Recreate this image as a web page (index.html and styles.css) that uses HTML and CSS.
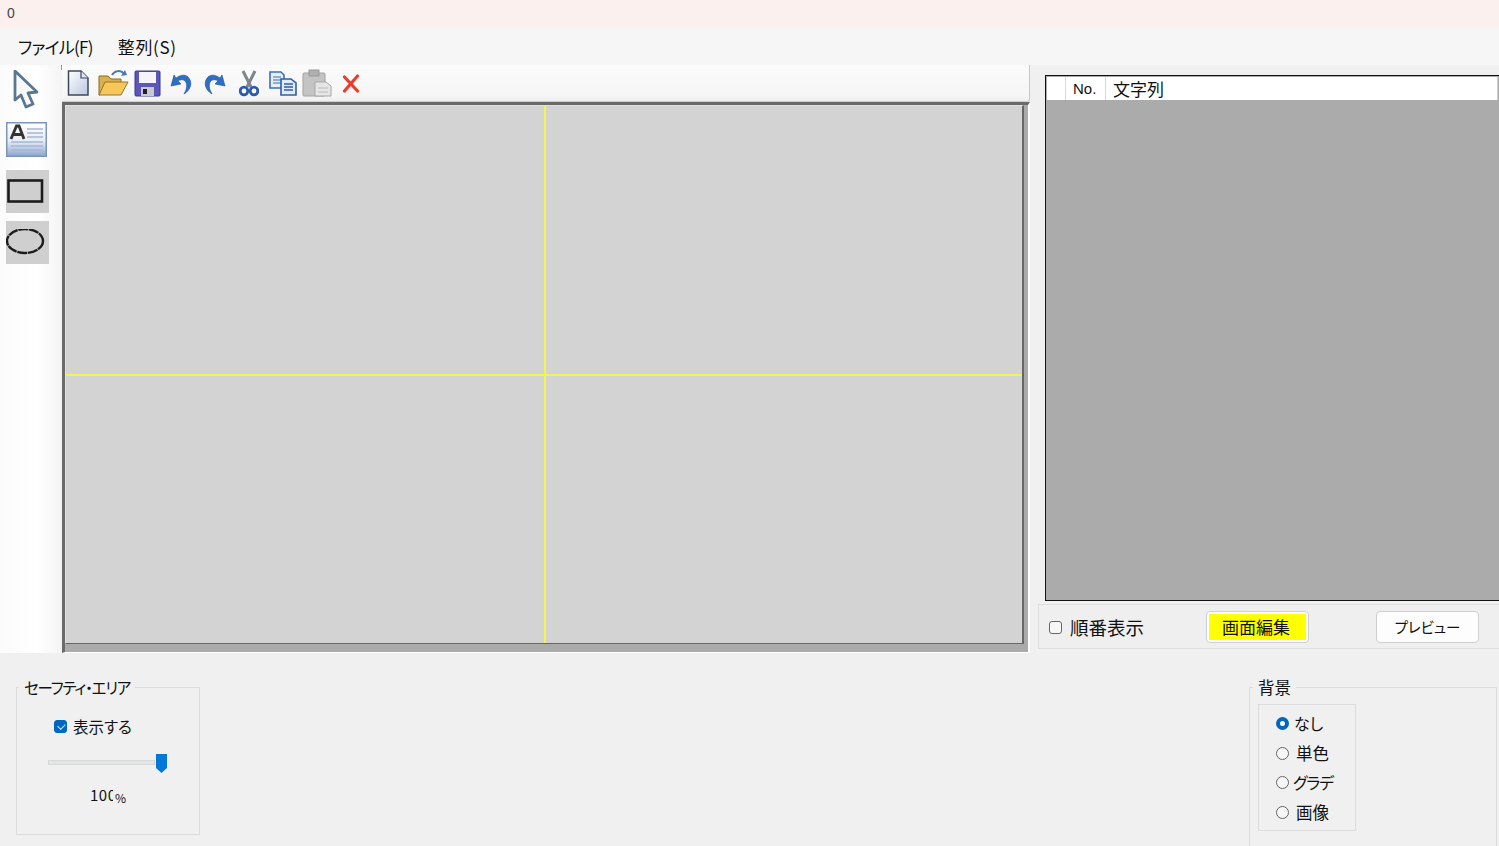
FILE: index.html
```html
<!DOCTYPE html>
<html lang="ja">
<head>
<meta charset="utf-8">
<title>0</title>
<link rel="stylesheet" href="styles.css">
</head>
<body>
<div class="app">
  <header class="titlebar"><span class="title">0</span></header>
  <nav class="menubar"><span class="menu-file">ファイル(F)</span><span class="menu-align">整列(S)</span></nav>
  <main class="main">
    <aside class="tools">
      <button class="tool tool-arrow"><svg width="28" height="40" viewBox="0 0 28 40"><path d="M3 1 L3 30 L9 25 L14 37 L21 34 L16 23 L25 22 Z" fill="#f7f9fc" stroke="#5b7690" stroke-width="2.8" stroke-linejoin="round"/></svg></button>
      <button class="tool tool-text"><svg width="41" height="35" viewBox="0 0 41 35"><defs><linearGradient id="gt" x1="0" y1="0" x2="0" y2="1"><stop offset="0" stop-color="#fff"/><stop offset=".55" stop-color="#e6ecf6"/><stop offset="1" stop-color="#8ea5cf"/></linearGradient></defs><rect x=".75" y=".75" width="39.5" height="33.5" fill="url(#gt)" stroke="#7d94bd" stroke-width="1.5"/><path d="M5 17 L10.5 4 L13 4 L18 17 M7.5 12.5 H15.5" fill="none" stroke="#333" stroke-width="2.8"/><path d="M21 7 H37 M21 11 H37 M21 15 H37 M5 20 H37 M5 24 H37 M5 28 H37" stroke="#a5b6d6" stroke-width="1.5"/></svg></button>
      <button class="tool tool-shape"><svg width="38" height="26" viewBox="0 0 38 26"><rect x="2.5" y="1.5" width="33.5" height="21" fill="none" stroke="#1c1c1c" stroke-width="2.6"/></svg></button>
      <button class="tool tool-shape"><svg width="40" height="28" viewBox="0 0 40 28"><ellipse cx="19" cy="12" rx="18" ry="12" fill="none" stroke="#1c1c1c" stroke-width="2.4" stroke-dasharray="10 .7"/></svg></button>
    </aside>
    <section class="editor">
      <div class="toolbar">
        <button class="tb"><svg width="24" height="28" viewBox="1 0 24 28"><defs><linearGradient id="gn" x1="0" y1="0" x2="1" y2="1"><stop offset="0" stop-color="#fff"/><stop offset="1" stop-color="#b9c7e2"/></linearGradient></defs><path d="M2.5 2 H15 L22 9 V26 H2.5 Z" fill="url(#gn)" stroke="#3c4858" stroke-width="1.5"/><path d="M15 2 V9 H22" fill="#dfe6f2" stroke="#3c4858" stroke-width="1.2"/></svg></button>
        <button class="tb"><svg width="32" height="28" viewBox="0 0 32 28"><path d="M15 6 C18 1 24 1 27 5" fill="none" stroke="#4a7bb5" stroke-width="2"/><path d="M24 7 L30 6 L28 1 Z" fill="#4a7bb5"/><path d="M2 7 H11 L14 10 H24 V14 H8 L3 26 H2 Z" fill="#d9b04e" stroke="#8a6d22"/><path d="M8 13 H31 L24 26 H2 Z" fill="#f6c85a" stroke="#94742a"/></svg></button>
        <button class="tb"><svg width="27" height="28" viewBox="0 0 27 28"><rect x="1" y="2" width="25" height="25" rx="1" fill="#5b56b8" stroke="#3c3a8c"/><rect x="5" y="3" width="17" height="11" fill="#f4f4fa"/><rect x="7" y="18" width="13" height="9" fill="#c9c9d6"/><rect x="9" y="20" width="4" height="5" fill="#222"/></svg></button>
        <button class="tb"><svg width="24" height="24" viewBox="0 0 24 24"><path d="M5 4 L2 15 L12 13 L9 10 C13 7 20 9 17 19 L15 23 C22 19 24 11 19 6 C16 3 11 4 7 7 Z" fill="#2c6fc4" stroke="#1a4f98" stroke-width=".6"/></svg></button>
        <button class="tb"><svg width="24" height="24" viewBox="0 0 24 24"><path d="M19 4 L22 15 L12 13 L15 10 C11 7 4 9 7 19 L9 23 C2 19 0 11 5 6 C8 3 13 4 17 7 Z" fill="#2c6fc4" stroke="#1a4f98" stroke-width=".6"/></svg></button>
        <button class="tb"><svg width="20" height="27" viewBox="0 0 20 27"><path d="M4 1 L12 17 M16 1 L8 17" stroke="#7f858c" stroke-width="3"/><circle cx="5" cy="21" r="3.8" fill="none" stroke="#2a5bb0" stroke-width="2.8"/><circle cx="15" cy="21" r="3.8" fill="none" stroke="#2a5bb0" stroke-width="2.8"/></svg></button>
        <button class="tb"><svg width="28" height="26" viewBox="0 0 28 26"><path d="M1 2 H12 L15 5 V18 H1 Z" fill="#e6eefa" stroke="#3e6fb4" stroke-width="1.6"/><path d="M4 7 H12 M4 10 H12 M4 13 H12" stroke="#3e6fb4" stroke-width="1.2"/><path d="M12 9 H22 L27 13 V25 H12 Z" fill="#e2ebf9" stroke="#2f5ea8" stroke-width="1.6"/><path d="M15 14 H24 M15 17 H24 M15 20 H24" stroke="#2f5ea8" stroke-width="1.4"/></svg></button>
        <button class="tb"><svg width="30" height="28" viewBox="0 0 30 28"><rect x="1" y="4" width="22" height="23" rx="1" fill="#c4c4c4" stroke="#a2a2a2"/><rect x="7" y="1" width="10" height="6" fill="#b0b0b0" stroke="#9a9a9a"/><path d="M13 13 H24 L29 17 V27 H13 Z" fill="#e6e6e6" stroke="#a6a6a6"/><path d="M16 19 H26 M16 23 H26" stroke="#bcbcbc"/></svg></button>
        <button class="tb"><svg width="19" height="19" viewBox="0.5 0 19 19"><path d="M3 3 L16 17 M16 2 L3 17" stroke="#ed3b2c" stroke-width="3.2" stroke-linecap="round"/></svg></button>
      </div>
      <div class="stage">
        <div class="canvas">
          <div class="guide guide-v"></div>
          <div class="guide guide-h"></div>
        </div>
      </div>
    </section>
    <aside class="side">
      <div class="list">
        <div class="list-head">
          <span class="cell cell-check"></span>
          <span class="cell cell-no">No.</span>
          <span class="cell cell-text">文字列</span>
        </div>
      </div>
      <div class="actions">
        <label class="order"><input type="checkbox" class="check"><span>順番表示</span></label>
        <button class="btn btn-edit"><span>画面編集</span></button>
        <button class="btn btn-preview">プレビュー</button>
      </div>
    </aside>
  </main>
  <footer class="bottom">
    <fieldset class="group safety">
      <legend>セーフティ・エリア</legend>
      <label class="show"><input type="checkbox" class="check" checked><span>表示する</span></label>
      <div class="slider">
        <div class="track"></div>
        <svg class="thumb" width="11" height="19" viewBox="0 0 11 19"><path d="M0 0 H11 V14 L5.5 19 L0 14 Z" fill="#0078d7"/></svg>
      </div>
      <div class="percent"><span>100</span><small>%</small></div>
    </fieldset>
    <fieldset class="group background">
      <legend>背景</legend>
      <div class="radios">
        <label class="radio-row"><input type="radio" name="bg" class="radio" checked><span>なし</span></label>
        <label class="radio-row"><input type="radio" name="bg" class="radio"><span class="kanji">単色</span></label>
        <label class="radio-row"><input type="radio" name="bg" class="radio"><span class="tight">グラデ</span></label>
        <label class="radio-row"><input type="radio" name="bg" class="radio"><span class="kanji">画像</span></label>
      </div>
    </fieldset>
  </footer>
</div>
</body>
</html>
```
FILE: styles.css
```css
* { box-sizing: border-box; }
html, body { margin: 0; padding: 0; }
body {
  width: 1499px;
  height: 846px;
  overflow: hidden;
  background: #f0f0f0;
  color: #111;
  font-family: "Noto Sans CJK JP", "Noto Sans", sans-serif;
  font-feature-settings: "palt";
  font-size: 15px;
}
button { font: inherit; font-feature-settings: "palt"; color: inherit; padding: 0; margin: 0; border: 0; background: none; }
label { display: flex; align-items: center; }
.app { display: flex; flex-direction: column; width: 1499px; height: 846px; overflow: hidden; }

.titlebar { height: 28px; background: #fbf0ee; padding: 3px 0 0 7px; flex: none; }
.title { display: block; font-size: 14px; line-height: 20px; color: #444; font-family: "Liberation Sans", sans-serif; }
.menubar { height: 37px; background: #f6f6f6; flex: none; display: flex; gap: 25px; padding: 6px 0 0 18px; font-size: 17px; line-height: 25px; }
.menu-file { letter-spacing: -.7px; }
.menu-align { letter-spacing: .6px; }

.main { height: 588px; flex: none; display: flex; background: #f0f0f0; }
.tools { width: 62px; flex: none; background: linear-gradient(90deg, #fbfbfb, #ffffff 60%, #f4f4f4); display: flex; flex-direction: column; padding: 0 0 0 6px; }
.tool { display: flex; align-items: center; justify-content: center; width: 43px; }
.tool-arrow { height: 47px; padding: 2px 0 0 6px; margin-bottom: 10px; justify-content: flex-start; }
.tool-text { height: 45px; margin-bottom: 3px; justify-content: flex-start; align-items: flex-start; }
.tool-shape { height: 43px; background: #cfcfcf; margin-bottom: 8px; justify-content: flex-start; }
.tool svg { filter: blur(.5px); display: block; }

.editor { width: 968px; flex: none; display: flex; flex-direction: column; position: relative; }
.editor::before { content: ""; position: absolute; left: -1px; top: 0; width: 1px; height: 5px; background: #999; }
.toolbar { height: 37px; flex: none; display: flex; align-items: center; background: linear-gradient(#fbfbfb, #f6f6f6 85%, #efefef); border-right: 1px solid #c8c8c8; border-bottom: 1px solid #d0d0d0; border-radius: 0 0 3px 0; }
.tb { width: 34px; flex: none; display: flex; align-items: center; justify-content: center; }
.tb svg { filter: blur(.5px); display: block; }
.stage { flex: 1; background: #ababab; border-left: 3px solid #6b6b6b; border-top: 3px solid #6b6b6b; border-bottom: 1px solid #fff; border-right: 2px solid #fff; padding-bottom: 8px; padding-right: 4px; }
.canvas { position: relative; height: 100%; background: #d3d3d3; border-left: 1px solid #f4f450; border-top: 1px solid #f4f450; border-right: 2px solid #666; border-bottom: 1px solid #666; }
.guide { position: absolute; background: #f4f450; }
.guide-v { left: 478px; top: 0; bottom: 0; width: 2px; }
.guide-h { left: -1px; right: 0; top: 268px; height: 2px; }

.side { flex: 1; min-width: 0; display: flex; flex-direction: column; padding: 10px 0 0 8px; }
.list { margin-left: 7px; height: 526px; background: #ababab; border: 1px solid #111; border-right: 0; padding: 1px 1px 0 1px; }
.list-head { height: 23px; display: flex; background: #fff; font-size: 17px; line-height: 24px; border-right: 1px solid #ccc; }
.cell { border-right: 1px solid #d8d8d8; flex: none; }
.cell-check { width: 19px; }
.cell-no { width: 40px; padding-left: 7px; font-size: 15px; font-family: "Liberation Sans", sans-serif; }
.cell-text { flex: 1; border-right: 0; padding-left: 7px; }

.actions { margin-top: 3px; height: 45px; display: flex; align-items: center; background: #efefef; border: 1px solid #dedede; border-right: 0; padding: 0 0 0 10px; }
.order { width: 157px; flex: none; gap: 8px; font-size: 18.5px; }
.order .check { margin-top: 1px; }
.btn { height: 32px; width: 103px; flex: none; border: 1px solid #cfcfcf; border-radius: 4px; background: #fdfdfd; font-size: 14.5px; line-height: 20px; }
.btn-edit { padding: 2px; font-size: 17px; }
.btn-edit span { display: block; height: 100%; padding-right: 3px; background: #ffff00; line-height: 25px; font-feature-settings: normal; }
.btn-preview { margin-left: 67px; }

.check { appearance: none; -webkit-appearance: none; width: 13px; height: 13px; margin: 0; flex: none; border: 1px solid #666; border-radius: 3px; background: #f7f7f7; position: relative; }
.check:checked { background: #0067c0; border-color: #0067c0; }
.check:checked::after { content: ""; position: absolute; left: 3.5px; top: 1.5px; width: 3.5px; height: 6px; border-right: 1px solid #cfe3f5; border-bottom: 1px solid #cfe3f5; transform: rotate(45deg); }

.bottom { flex: 1; display: flex; justify-content: space-between; align-items: flex-start; padding: 23px 2px 0 16px; overflow: hidden; background: #f0f0f0; }
.group { margin: 0; padding: 0; border: 1px solid #dcdcdc; min-width: 0; }
.group legend { margin-left: 2px; padding: 0 5px; font-size: 15.5px; line-height: 22px; }
.safety legend { letter-spacing: -1.2px; }
.safety { width: 184px; height: 159px; }
.show { gap: 6px; margin-top: 16px; padding-left: 37px; height: 24px; font-size: 15.5px; line-height: 22px; }
.slider { display: flex; align-items: center; gap: 1px; margin: 16px 0 0 31px; height: 19px; }
.track { width: 107px; height: 5px; margin-bottom: 2px; background: #e3e6e4; border: 1px solid #d6d9d7; }
.thumb { display: block; flex: none; }
.percent { margin: 11px 0 0 73px; display: flex; align-items: flex-end; font-size: 15px; line-height: 22px; letter-spacing: .5px; }
.percent span { display: block; width: 23px; overflow: hidden; white-space: nowrap; }
.percent small { font-size: 12px; line-height: 16px; margin-left: 2px; letter-spacing: 0; }

.background { width: 248px; height: 220px; padding: 0; }
.background legend { margin-left: 3px; font-size: 16.5px; }
.radios { width: 98px; height: 127px; margin: 6px 0 0 8px; border: 1px solid #dcdcdc; padding: 3px 0 0 17px; display: flex; flex-direction: column; }
.radio-row { height: 29.7px; gap: 5px; flex: none; font-size: 16px; }
.radio-row .radio { margin-top: 1px; }
.kanji { font-size: 16.5px; margin-left: 2px; }
.tight { letter-spacing: -1px; margin-left: -1px; }
.radio { appearance: none; -webkit-appearance: none; width: 13px; height: 13px; margin: 0; flex: none; border: 1px solid #666; border-radius: 50%; background: #f7f7f7; }
.radio:checked { border: 4px solid #0067c0; background: #fff; }
```
